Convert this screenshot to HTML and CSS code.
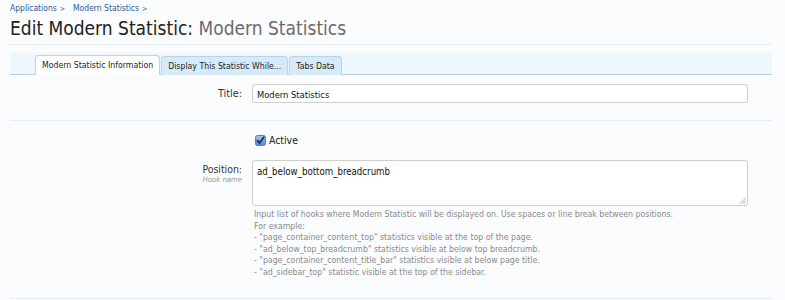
FILE: index.html
```html
<!DOCTYPE html>
<html>
<head>
<meta charset="utf-8">
<link rel="stylesheet" href="styles.css">
</head>
<body>
<div class="page">
  <div class="breadcrumb"><a>Applications</a><span class="sep">&gt;</span><a>Modern Statistics</a><span class="sep">&gt;</span></div>
  <h1 class="title">Edit Modern Statistic: <span class="sub">Modern Statistics</span></h1>
  <div class="tabbar">
    <div class="tab active">Modern Statistic Information</div>
    <div class="tab">Display This Statistic While...</div>
    <div class="tab">Tabs Data</div>
  </div>
  <div class="section">
    <div class="row row-title">
      <label class="label">Title:</label>
      <div class="field"><div class="input">Modern Statistics</div></div>
    </div>
  </div>
  <div class="section section2">
    <div class="row row-check">
      <div class="label"></div>
      <div class="field check">
        <svg class="cb" width="11" height="11" viewBox="0 0 11 11"><defs><linearGradient id="g" x1="0" y1="0" x2="0" y2="1"><stop offset="0" stop-color="#a9c8ef"/><stop offset="1" stop-color="#4f86d3"/></linearGradient></defs><rect x="0.5" y="0.5" width="10" height="10" rx="2" fill="url(#g)" stroke="#5a7fb5"/><path d="M2.4 5.6 L4.5 8 L8.8 2.2" fill="none" stroke="#1b2a4e" stroke-width="1.7" stroke-linecap="round" stroke-linejoin="round"/></svg>
        <span class="check-label">Active</span>
      </div>
    </div>
    <div class="row row-pos">
      <div class="label">Position:<div class="hint">Hook name</div></div>
      <div class="field">
        <div class="textarea">ad_below_bottom_breadcrumb
          <svg class="grip" width="7" height="7" viewBox="0 0 7 7"><path d="M6.5 1 L1 6.5 M6.5 3.5 L3.5 6.5 M6.5 5.5 L5.5 6.5" stroke="#999" stroke-width="0.8"/></svg>
        </div>
        <div class="explain">Input list of hooks where Modern Statistic will be displayed on. Use spaces or line break between positions.<br>For example:<br>- "page_container_content_top" statistics visible at the top of the page.<br>- "ad_below_top_breadcrumb" statistics visible at below top breadcrumb.<br>- "page_container_content_title_bar" statistics visible at below page title.<br>- "ad_sidebar_top" statistic visible at the top of the sidebar.</div>
      </div>
    </div>
  </div>
</div>
</body>
</html>
```
FILE: styles.css
```css
html, body { margin: 0; padding: 0; }
body {
  background: #fbfcfe;
  font-family: "DejaVu Sans Condensed", "DejaVu Sans", sans-serif;
  color: #222;
  width: 785px;
  height: 300px;
  overflow: hidden;
}
.page { padding: 0 13px 0 10px; }
.breadcrumb {
  font-size: 8.5px;
  color: #2f5a92;
  padding-top: 3px;
  height: 11px;
  line-height: 11px;
}
.breadcrumb .sep { margin: 0 8px 0 3px; font-size: 7px; }
.title {
  margin: 2px 0 0;
  font-size: 19px;
  font-weight: normal;
  line-height: 24px;
  color: #222;
  padding-bottom: 4px;
  border-bottom: 1px solid #e6edf3;
}
.title .sub { color: #6b6b6b; }
.tabbar {
  margin-top: 7px;
  height: 23px;
  background: #eef7fc;
  border-top: 1px solid #f4f9fc;
  border-bottom: 1px solid #b9cde0;
  padding-left: 25px;
  display: flex;
  align-items: flex-end;
  box-sizing: border-box;
}
.tab {
  font-size: 8.7px;
  height: 18px;
  line-height: 18px;
  padding: 0 6px;
  border: 1px solid #b9d4ea;
  border-bottom: none;
  border-radius: 4px 4px 0 0;
  background: #d6eaf9;
  color: #1e1e1e;
  margin-bottom: -1px;
  margin-right: 1px;
  box-sizing: content-box;
}
.tab.active { background: #fff; height: 19px; }
.section { border-bottom: 1px solid #e2eef6; padding: 9px 0 16px; }
.section2 { padding-top: 12px; padding-bottom: 20px; }
.row { display: grid; grid-template-columns: 232px 496px; column-gap: 10px; }
.label { text-align: right; font-size: 10.4px; color: #333; }
.row-title .label { line-height: 20px; font-size: 10.8px; }
.input {
  height: 19px;
  line-height: 19px;
  border: 1px solid #cfcfcf;
  border-radius: 3px;
  background: #fff;
  font-size: 9.3px;
  padding: 0 4px;
  color: #111;
  box-sizing: border-box;
}
.check { display: flex; align-items: center; height: 14px; padding-left: 3px; }
.cb { margin-right: 3px; }
.check-label { font-size: 10.4px; color: #222; }
.row-pos { margin-top: 13px; }
.row-pos .label { padding-top: 4px; line-height: 11px; }
.hint { font-size: 7.7px; font-style: italic; color: #999; line-height: 10px; }
.textarea {
  position: relative;
  height: 46px;
  border: 1px solid #cfcfcf;
  border-radius: 3px;
  background: #fff;
  font-size: 9.6px;
  padding: 5px 4px;
  box-sizing: border-box;
  color: #111;
}
.grip { position: absolute; right: 1px; bottom: 1px; }
.explain {
  margin-top: 3px;
  font-size: 8.7px;
  line-height: 11.5px;
  color: #8a8a8a;
  padding-left: 2px;
}
```
